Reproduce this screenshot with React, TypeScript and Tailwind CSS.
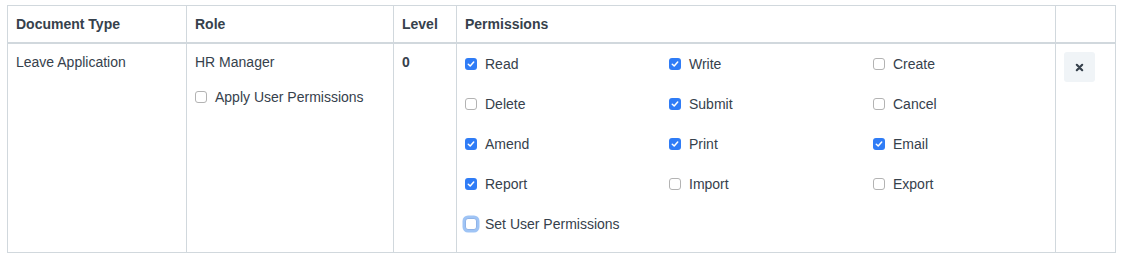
import React from 'react';

type Perm = { label: string; checked: boolean; focus?: boolean };

const perms: Perm[] = [
  { label: 'Read', checked: true },
  { label: 'Write', checked: true },
  { label: 'Create', checked: false },
  { label: 'Delete', checked: false },
  { label: 'Submit', checked: true },
  { label: 'Cancel', checked: false },
  { label: 'Amend', checked: true },
  { label: 'Print', checked: true },
  { label: 'Email', checked: true },
  { label: 'Report', checked: true },
  { label: 'Import', checked: false },
  { label: 'Export', checked: false },
  { label: 'Set User Permissions', checked: false, focus: true },
];

const Box: React.FC<{ checked: boolean; focus?: boolean }> = ({ checked, focus }) => {
  if (checked) {
    return (
      <span className="flex h-3 w-3 shrink-0 items-center justify-center rounded-[3px] bg-[#2f7cf6]">
        <svg viewBox="0 0 12 12" className="h-3 w-3">
          <path d="M3.3 6.2 L5.2 8 L8.7 4" fill="none" stroke="white" strokeWidth="1.5" strokeLinecap="round" strokeLinejoin="round" />
        </svg>
      </span>
    );
  }
  return (
    <span
      className={
        focus
          ? 'block h-3 w-3 shrink-0 rounded-[3px] border border-[#8fb3e8] bg-white shadow-[0_0_0_2.5px_#9fc4f5]'
          : 'block h-3 w-3 shrink-0 rounded-[3px] border border-[#b3b3b3] bg-white'
      }
    />
  );
};

const th = 'border border-[#d1d8dd] border-b-2 px-2 py-2 text-left font-bold align-top';
const td = 'border border-[#d1d8dd] px-2 py-2 align-top';

export default function App() {
  return (
    <div
      className="bg-white pl-[7px] pt-[5px] text-[14px] leading-5 text-[#36414c]"
      style={{ fontFamily: '"Liberation Sans", Arial, sans-serif' }}
    >
      <table className="w-[1108px] table-fixed border-collapse">
        <colgroup>
          <col className="w-[179px]" />
          <col className="w-[207px]" />
          <col className="w-[63px]" />
          <col className="w-[599px]" />
          <col className="w-[60px]" />
        </colgroup>
        <thead>
          <tr>
            <th className={th}>Document Type</th>
            <th className={th}>Role</th>
            <th className={th}>Level</th>
            <th className={th}>Permissions</th>
            <th className={th}></th>
          </tr>
        </thead>
        <tbody>
          <tr>
            <td className={td}>Leave Application</td>
            <td className={td}>
              <div>HR Manager</div>
              <label className="mt-[15px] flex h-5 items-center gap-2">
                <Box checked={false} />
                <span>Apply User Permissions</span>
              </label>
            </td>
            <td className={`${td} font-bold`}>0</td>
            <td className={td}>
              <div className="grid grid-cols-3 gap-x-[30px] gap-y-5 pt-[2px] pb-[10px]">
                {perms.map((p) => (
                  <label key={p.label} className="flex h-5 items-center gap-2">
                    <Box checked={p.checked} focus={p.focus} />
                    <span>{p.label}</span>
                  </label>
                ))}
              </div>
            </td>
            <td className={td}>
              <button className="flex h-[30px] w-[31px] items-center justify-center rounded-[3px] bg-[#f0f4f7]">
                <svg viewBox="0 0 10 10" className="h-[9px] w-[9px]">
                  <path d="M2 2 L8 8 M8 2 L2 8" stroke="#36414c" strokeWidth="2.4" strokeLinecap="round" />
                </svg>
              </button>
            </td>
          </tr>
        </tbody>
      </table>
    </div>
  );
}
